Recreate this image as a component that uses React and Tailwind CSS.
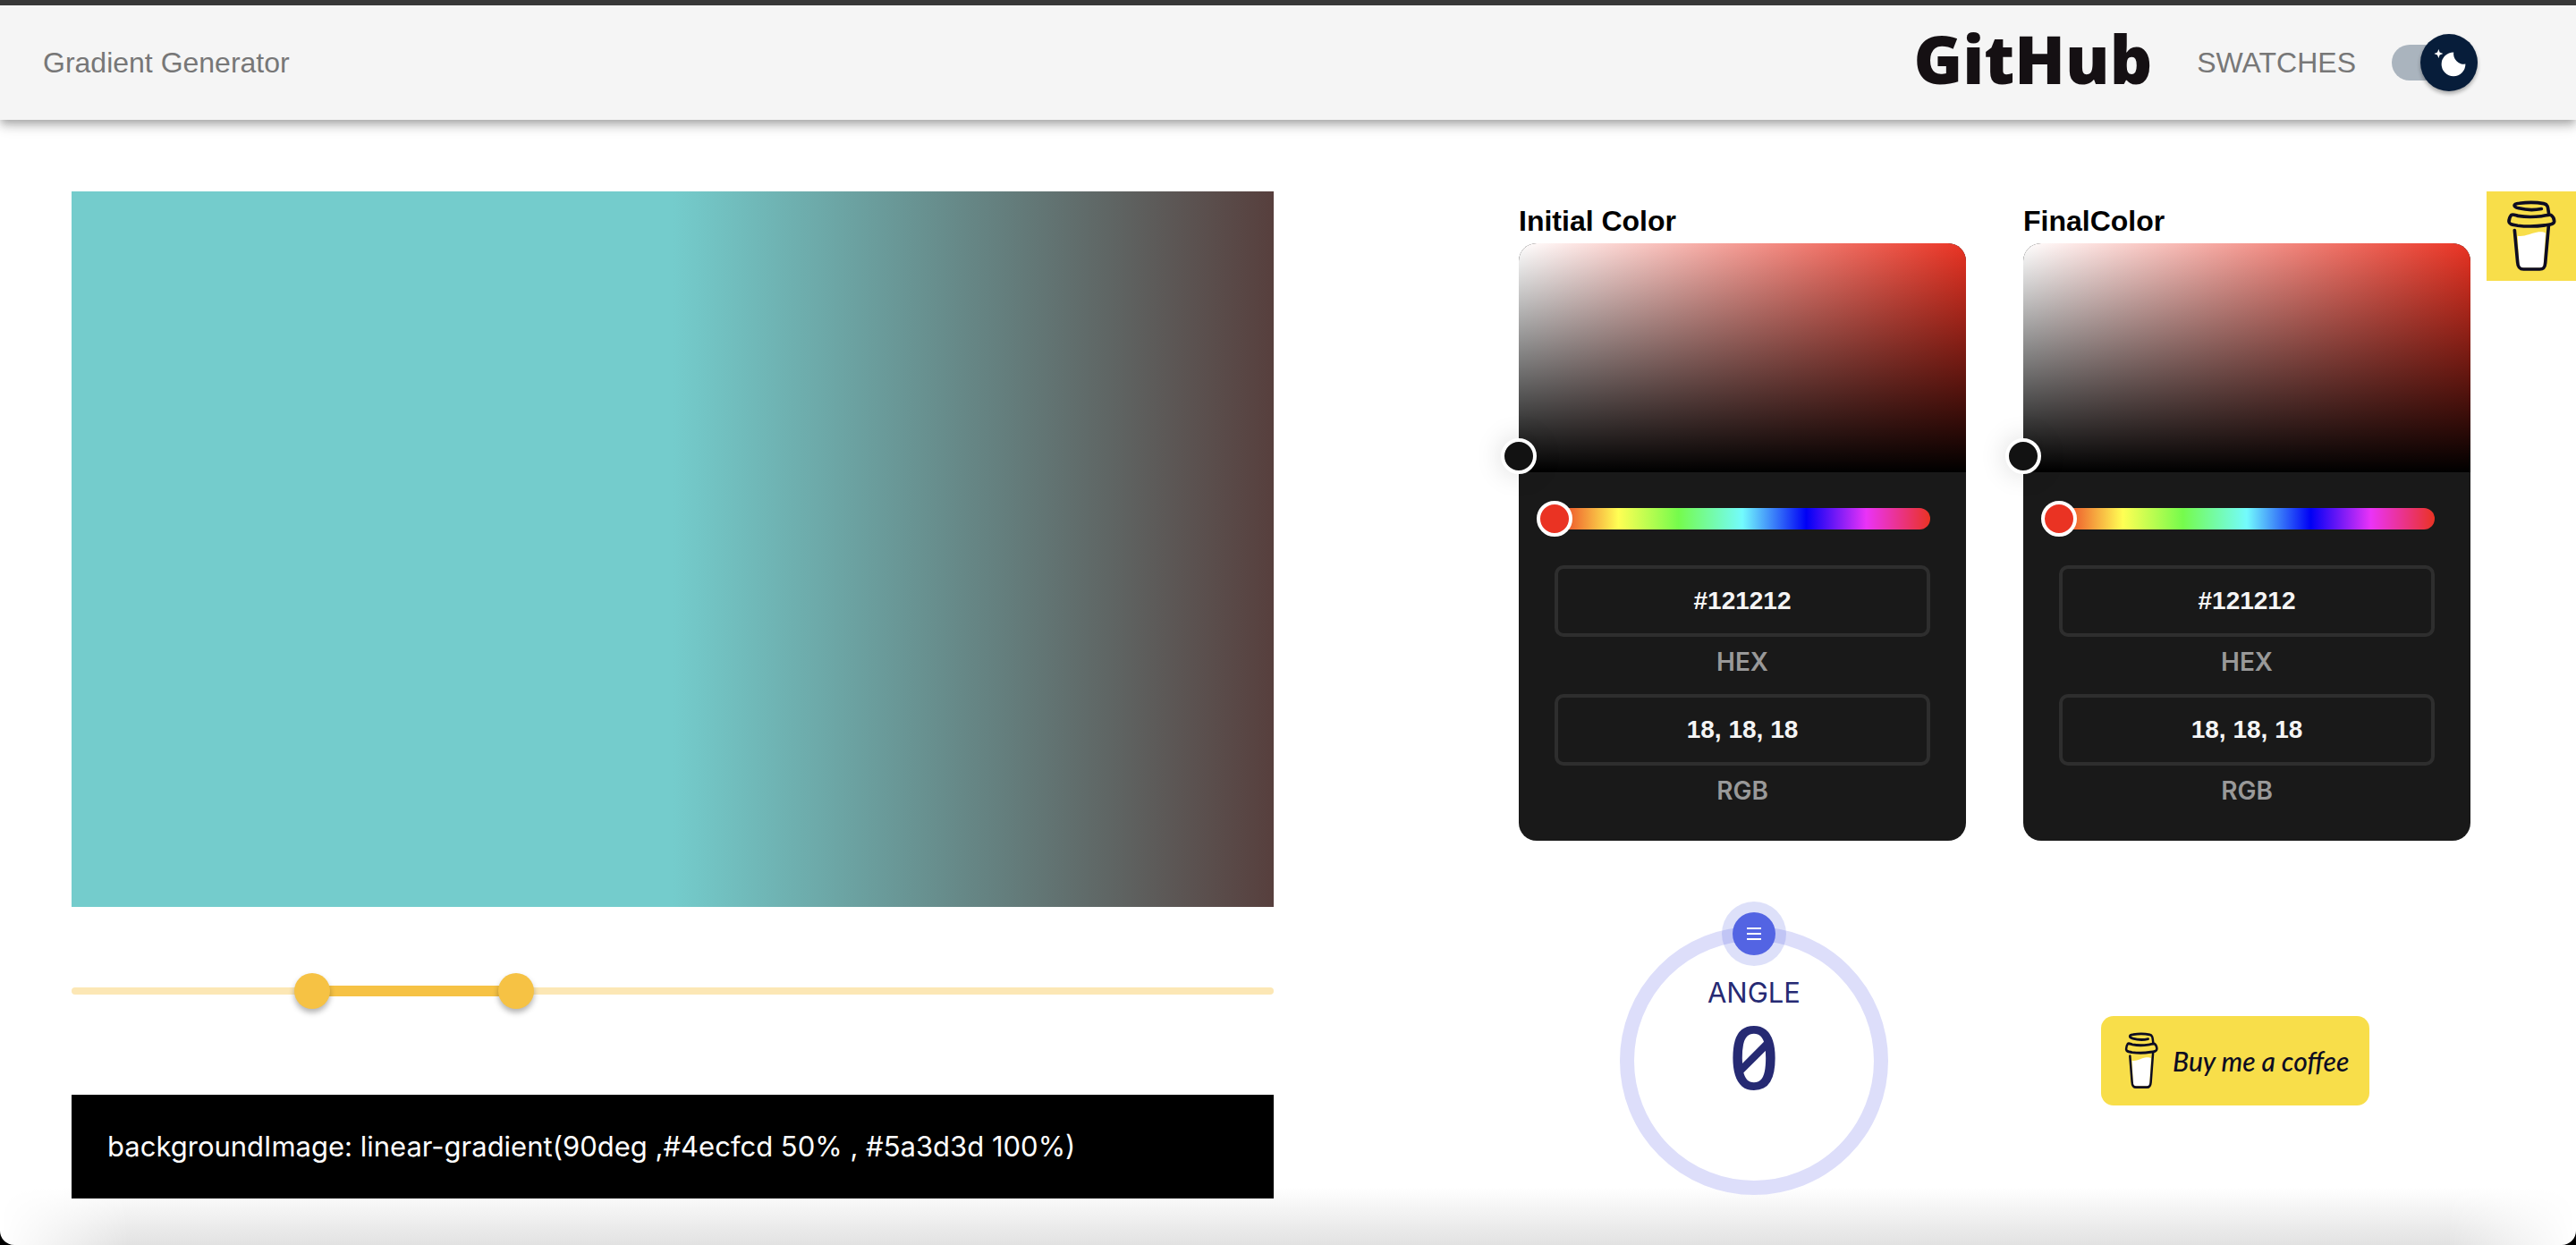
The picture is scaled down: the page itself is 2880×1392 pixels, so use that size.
import { useState } from "react";

function CoffeeCup({ className }) {
  return (
    <svg viewBox="66 40 168 244" preserveAspectRatio="none" className={className} fill="none" stroke="#0d0c22" strokeWidth="11" strokeLinecap="round" strokeLinejoin="round" aria-hidden="true">
      <path d="M104 161C128 165 148 152 168 149C184 146 192 149 198 151L191 262Q188 270 180 270H124Q112 270 110 262Z" fill="#fff" stroke="none" />
      <path d="M184 69C160 74 128 72 108 67C88 62 88 52 110 50C140 46 170 47 192 51C207 54 206 66 209 88" />
      <path d="M83 90C78 96 75 106 75 113C76 123 88 123 104 126C136 130 168 129 196 125C214 123 226 122 227 112C227 102 223 95 216 90C208 88 200 92 184 94C158 97 130 97 106 93C98 91 88 86 83 90Z" />
      <path d="M94 142L104 251C105 268 110 275 124 275H178C192 275 196 268 197 254L208 128" />
    </svg>
  );
}

function ThemeSwitch() {
  const [dark, setDark] = useState(true);
  return (
    <label className="relative flex h-16 w-24 cursor-pointer items-center">
      <input type="checkbox" role="switch" aria-label="Dark theme" checked={dark} onChange={() => setDark(!dark)} className="peer sr-only" />
      <span className="h-10 w-full rounded-full bg-[#aab4be]" />
      <span className="absolute left-0 top-0 flex size-16 items-center justify-center rounded-full bg-[#071d3a] shadow-[0_3px_4px_rgba(0,0,0,0.3)] peer-checked:left-8">
        <svg viewBox="0 0 20 20" className="size-10" fill="#fff" aria-hidden="true">
          <path d="M4.2 2.5l-.7 1.8-1.8.7 1.8.7.7 1.8.6-1.8L6.7 5l-1.9-.7-.6-1.8zm15 8.3a6.7 6.7 0 11-6.6-6.6 5.8 5.8 0 006.6 6.6z" />
        </svg>
      </span>
    </label>
  );
}

function Header() {
  return (
    <header className="relative flex h-[134px] items-center justify-between border-t-6 border-[#383838] bg-[#f5f5f5] pl-12 pr-[110px] shadow-[0_4px_8px_-2px_rgba(0,0,0,0.2),0_8px_10px_rgba(0,0,0,0.14),0_2px_20px_rgba(0,0,0,0.12)]">
      <h1 className="text-[32px] text-[#777]">Gradient Generator</h1>
      <div className="flex items-center">
        <a href="#github" className="mr-[50px] pb-2 font-['Open_Sans'] text-[74px] font-extrabold leading-[100px] text-[#151013]">GitHub</a>
        <a href="#swatches" className="mr-10 text-[32px] text-[#777]">SWATCHES</a>
        <ThemeSwitch />
      </div>
    </header>
  );
}

const stopInput =
  "pointer-events-none absolute -left-5 top-0 h-10 w-[calc(100%+40px)] appearance-none bg-transparent [&::-webkit-slider-thumb]:pointer-events-auto [&::-webkit-slider-thumb]:size-10 [&::-webkit-slider-thumb]:appearance-none [&::-webkit-slider-thumb]:rounded-full [&::-webkit-slider-thumb]:bg-[#f6c244] [&::-webkit-slider-thumb]:shadow-[0_4px_6px_rgba(0,0,0,0.3)]";

function StopSlider() {
  const [from, setFrom] = useState(20);
  const [to, setTo] = useState(37);
  return (
    <div className="relative mt-[74px] flex h-10 items-center">
      <div className="h-2 w-full rounded-full bg-[#fce7b5]" />
      <div className="absolute top-[14px] h-3 bg-[#f6c244]" style={{ left: `${from}%`, width: `${to - from}%` }} />
      <input type="range" aria-label="Initial color stop" min="0" max="100" value={from} onChange={(e) => setFrom(+e.target.value)} className={stopInput} />
      <input type="range" aria-label="Final color stop" min="0" max="100" value={to} onChange={(e) => setTo(+e.target.value)} className={stopInput} />
    </div>
  );
}

function Field({ id, label, value }) {
  return (
    <div className="flex flex-col">
      <input id={id} defaultValue={value} className="h-20 w-full rounded-[10px] border-4 border-[#2e2e2e] bg-transparent text-center text-[28px] font-bold text-[#f5f5f5]" />
      <label htmlFor={id} className="mt-2 h-10 text-center font-['Inter'] text-[28px] font-semibold leading-10 text-[#999]">{label}</label>
    </div>
  );
}

function ColorPicker({ id, title }) {
  return (
    <section className="w-[500px]">
      <h2 className="pt-2 text-[32px] font-bold leading-[50px] text-black">{title}</h2>
      <div className="rounded-[20px] bg-[#191919] pb-9">
        <div className="relative h-64 rounded-t-[20px] bg-[linear-gradient(to_top,#000,transparent),linear-gradient(to_right,#fff,#ea3323)]">
          <button type="button" aria-label={`${title} shade`} className="absolute -left-5 top-[93%] size-10 -translate-y-1/2 rounded-full border-4 border-white bg-[#121212] shadow-[0_0_30px_rgba(0,0,0,0.15)]" />
        </div>
        <div className="px-10 pt-10">
          <div className="relative h-6 rounded-full bg-[linear-gradient(to_right,#ea3323,#ffff54_17%,#75fb4c_33%,#73fbfd_50%,#0000f5_67%,#ea33f7_83%,#ea3323)]">
            <input type="range" aria-label={`${title} hue`} min="0" max="360" defaultValue="0" className="absolute -left-5 -top-2 h-10 w-[calc(100%+40px)] appearance-none bg-transparent [&::-webkit-slider-thumb]:size-10 [&::-webkit-slider-thumb]:appearance-none [&::-webkit-slider-thumb]:rounded-full [&::-webkit-slider-thumb]:border-4 [&::-webkit-slider-thumb]:border-white [&::-webkit-slider-thumb]:bg-[#ea3323]" />
          </div>
          <div className="mt-10 flex flex-col gap-4">
            <Field id={`${id}-hex`} label="HEX" value="#121212" />
            <Field id={`${id}-rgb`} label="RGB" value="18, 18, 18" />
          </div>
        </div>
      </div>
    </section>
  );
}

function AngleDial() {
  return (
    <div className="relative flex size-[300px] flex-col items-center rounded-full border-16 border-[#dddefa] pt-[38px] text-[#262a73]">
      <button type="button" aria-label="Rotate angle" className="absolute -top-11 flex size-[72px] items-center justify-center rounded-full bg-[#5364e3]/20">
        <span className="flex size-12 flex-col items-center justify-center gap-1 rounded-full bg-[#5364e3]">
          <span className="h-0.5 w-4 bg-white" />
          <span className="h-0.5 w-4 bg-white" />
          <span className="h-0.5 w-4 bg-white" />
        </span>
      </button>
      <span className="font-['Inter'] text-[31px] leading-10">ANGLE</span>
      <output className="font-['Noto_Sans'] text-[98px] font-medium leading-[100px] slashed-zero">0</output>
    </div>
  );
}

export default function App() {
  return (
    <div className="flex min-h-screen flex-col bg-black font-['Liberation_Sans',sans-serif]">
      <div className="relative flex-1 overflow-hidden rounded-b-2xl bg-white">
        <div className="pointer-events-none absolute inset-x-0 bottom-0 h-16 bg-linear-to-t from-[#e2e2e2] to-white mask-x-from-95% mask-x-to-100%" />
        <Header />
        <main className="relative grid grid-cols-2 pb-[52px] pt-20">
          <section className="pl-20 pr-4">
            <div className="h-[800px] bg-[linear-gradient(90deg,#74cccc_50%,#573f3d_100%)]" />
            <StopSlider />
            <div className="mt-24 flex h-[116px] items-center bg-black px-10">
              <code className="font-['Inter'] text-[31px] text-white">backgroundImage: linear-gradient(90deg ,#4ecfcd 50% , #5a3d3d 100%)</code>
            </div>
          </section>
          <section className="flex flex-col items-end pr-[118px]">
            <div>
              <div className="flex gap-16">
                <ColorPicker id="initial" title="Initial Color" />
                <ColorPicker id="final" title="FinalColor" />
              </div>
              <div className="-mx-1.5 mt-24 grid grid-cols-2 place-items-center">
                <AngleDial />
                <a href="#coffee" className="flex h-[100px] w-[300px] items-center gap-4 rounded-[14px] bg-[#f8de4a] pl-[26px] text-[#0d0c22]">
                  <CoffeeCup className="h-16 w-[38px] shrink-0" />
                  <span className="whitespace-nowrap font-['Lato'] text-[30px] font-medium italic">Buy me a coffee</span>
                </a>
              </div>
            </div>
          </section>
          <button type="button" aria-label="Buy me a coffee" className="absolute right-0 top-20 flex size-[100px] items-center justify-center bg-[#f8de4a]">
            <CoffeeCup className="h-20 w-14" />
          </button>
        </main>
      </div>
    </div>
  );
}
